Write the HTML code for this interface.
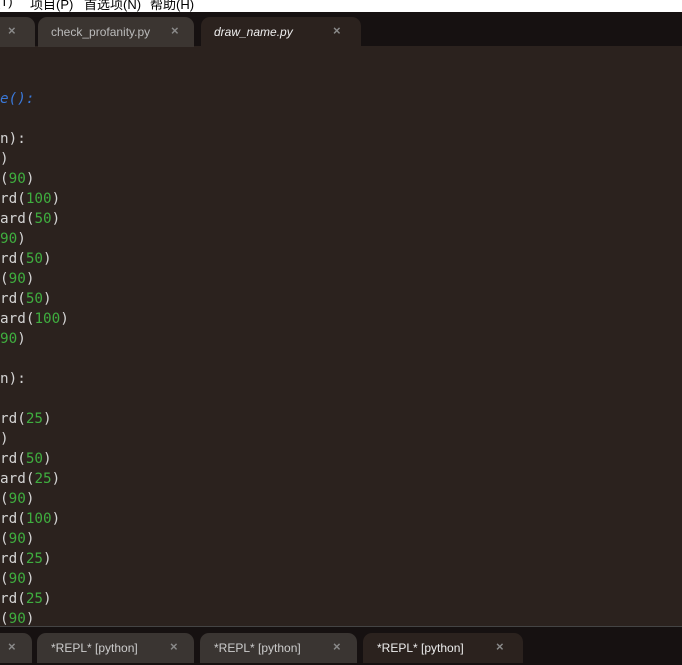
<!DOCTYPE html>
<html><head><style>
body{margin:0;width:682px;height:664px;overflow:hidden;background:#2b221e;position:relative;font-family:"Liberation Sans","Noto Sans CJK SC",sans-serif}
.menu{position:absolute;left:0;top:0;width:682px;height:12px;background:#fff;overflow:hidden}
.menu span{position:absolute;top:-6px;font-size:13px;color:#000}
.bar{position:absolute;left:0;width:682px;background:#161111}
.tab{position:absolute;height:30px;background:#3b3531;border-radius:9px 9px 0 0;color:#bbb;font-size:12px}
.tab .t{position:absolute;top:8px}
.tab .x{position:absolute;top:6px;color:#8a8a8a;font-size:13px;font-weight:bold}
.code{position:absolute;left:0;top:89px;font-family:"DejaVu Sans Mono",monospace;font-size:14.3px;line-height:20px;color:#d4d4d4;white-space:pre}
.n{color:#3fae3f}.b{color:#3a78d8;font-style:italic}
</style></head><body>
<div class="menu"><span style="left:-4px">(T)</span><span style="left:30px">项目(P)</span><span style="left:84px">首选项(N)</span><span style="left:150px">帮助(H)</span></div>
<div class="bar" style="top:12px;height:34px"></div>
<div class="tab" style="left:-10px;top:17px;width:45px"><span class="x" style="left:18px">×</span></div>
<div class="tab" style="left:38px;top:17px;width:156px"><span class="t" style="left:13px">check_profanity.py</span><span class="x" style="left:133px">×</span></div>
<div class="tab" style="left:201px;top:17px;width:160px;background:#2b221e"><span class="t" style="left:13px;font-style:italic;color:#eee">draw_name.py</span><span class="x" style="left:132px">×</span></div>
<div class="code"><span class="b">e():</span>

n):
)
(<span class="n">90</span>)
rd(<span class="n">100</span>)
ard(<span class="n">50</span>)
<span class="n">90</span>)
rd(<span class="n">50</span>)
(<span class="n">90</span>)
rd(<span class="n">50</span>)
ard(<span class="n">100</span>)
<span class="n">90</span>)

n):

rd(<span class="n">25</span>)
)
rd(<span class="n">50</span>)
ard(<span class="n">25</span>)
(<span class="n">90</span>)
rd(<span class="n">100</span>)
(<span class="n">90</span>)
rd(<span class="n">25</span>)
(<span class="n">90</span>)
rd(<span class="n">25</span>)
(<span class="n">90</span>)</div>
<div class="bar" style="top:626px;height:38px;border-top:1px solid #444"></div>
<div class="tab" style="left:-10px;top:633px;width:42px;background:#3a3532"><span class="x" style="left:18px">×</span></div>
<div class="tab" style="left:37px;top:633px;width:157px;background:#3a3532"><span class="t" style="left:14px;color:#ccc">*REPL* [python]</span><span class="x" style="left:133px">×</span></div>
<div class="tab" style="left:200px;top:633px;width:157px;background:#3a3532"><span class="t" style="left:14px;color:#ccc">*REPL* [python]</span><span class="x" style="left:133px">×</span></div>
<div class="tab" style="left:363px;top:633px;width:160px;background:#2b221e"><span class="t" style="left:14px;color:#eee">*REPL* [python]</span><span class="x" style="left:133px">×</span></div>
</body></html>
